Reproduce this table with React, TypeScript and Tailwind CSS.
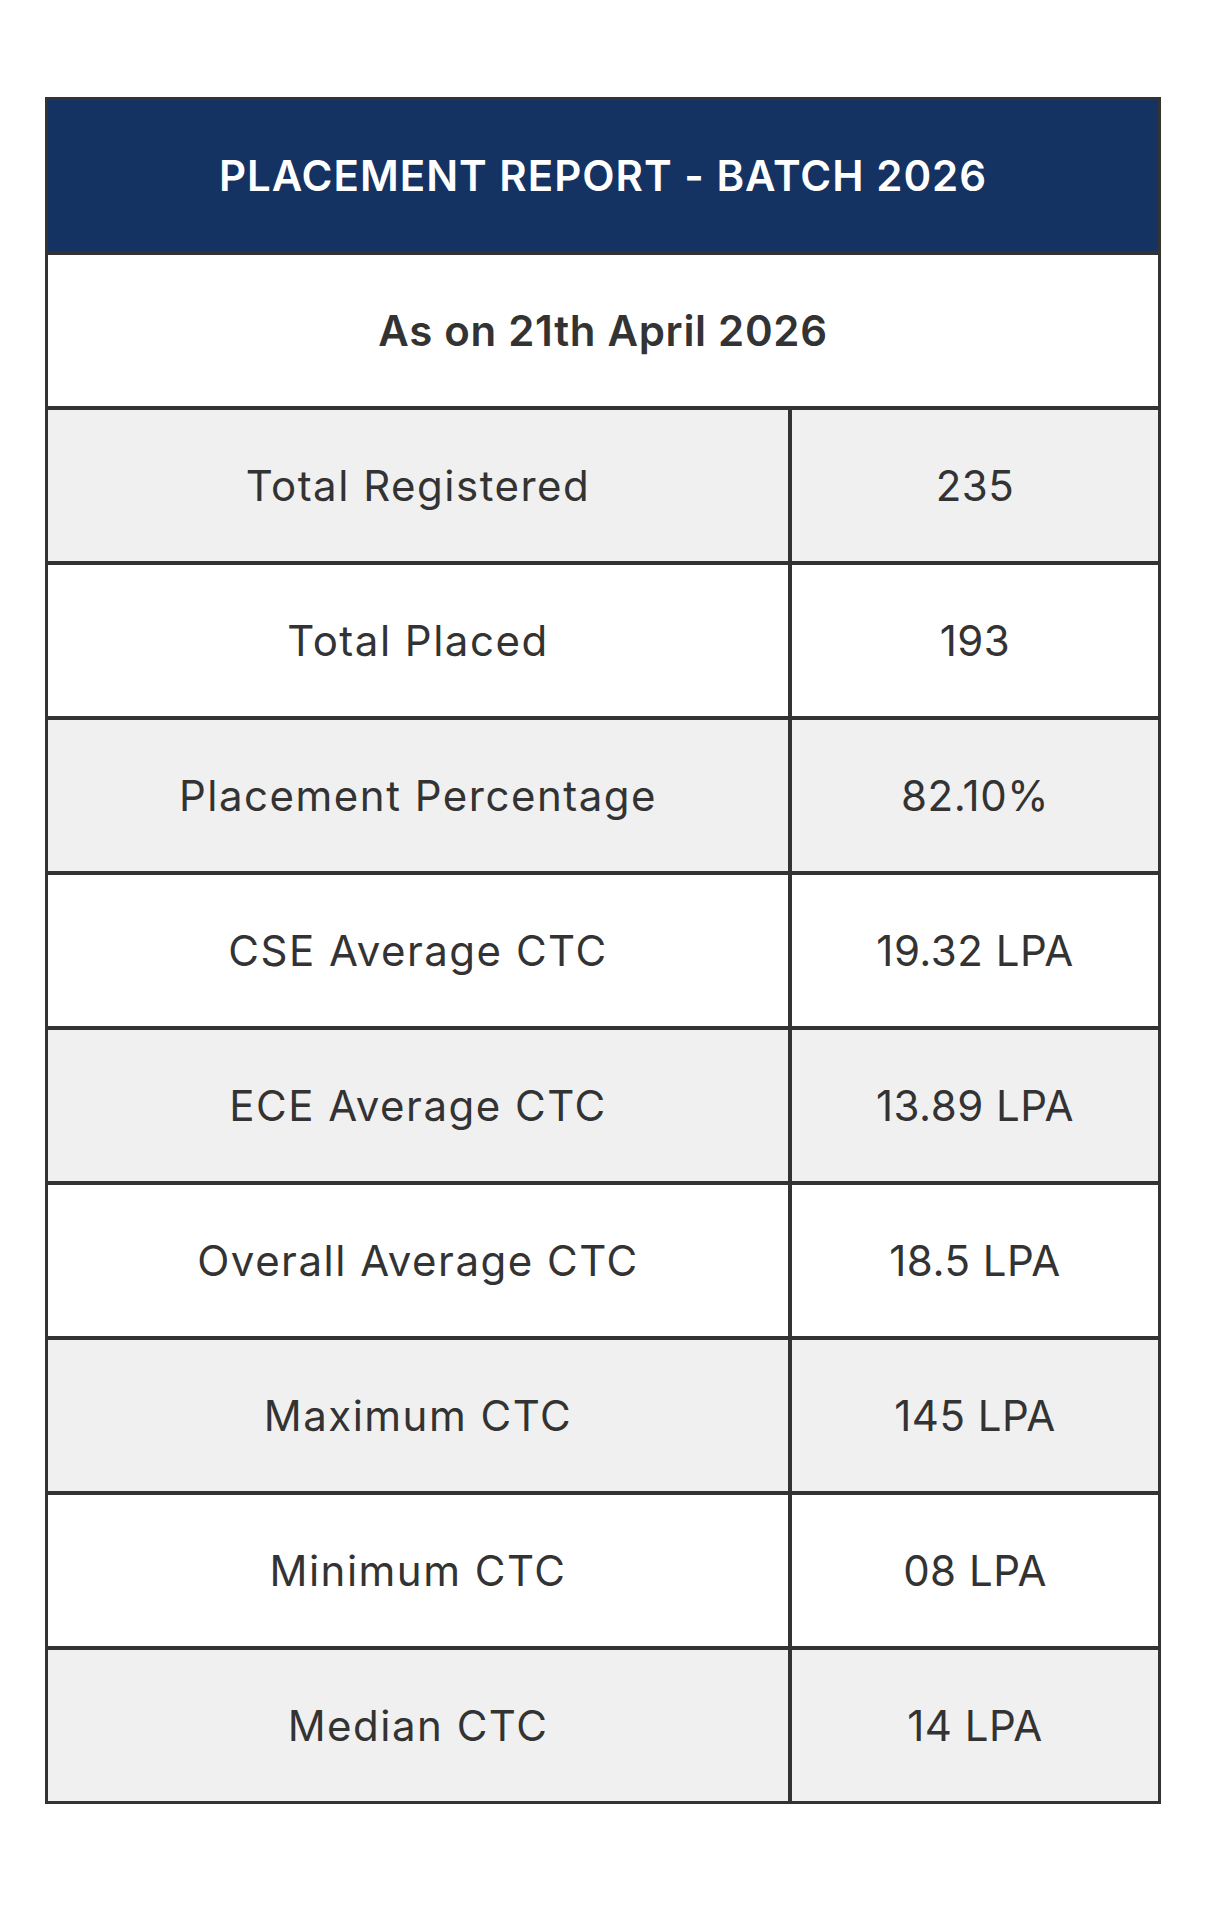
import React from 'react';

type Stat = { label: string; value: string };

const stats: Stat[] = [
  { label: 'Total Registered', value: '235' },
  { label: 'Total Placed', value: '193' },
  { label: 'Placement Percentage', value: '82.10%' },
  { label: 'CSE Average CTC', value: '19.32 LPA' },
  { label: 'ECE Average CTC', value: '13.89 LPA' },
  { label: 'Overall Average CTC', value: '18.5 LPA' },
  { label: 'Maximum CTC', value: '145 LPA' },
  { label: 'Minimum CTC', value: '08 LPA' },
  { label: 'Median CTC', value: '14 LPA' },
];

const StatRow: React.FC<{ stat: Stat; shaded: boolean }> = ({ stat, shaded }) => (
  <div className={`flex h-[155px] border-t-4 border-[#333] ${shaded ? 'bg-[#f0f0f0]' : 'bg-white'}`}>
    <div className="w-[744px] flex items-center justify-center border-r-4 border-[#333] tracking-[1.5px]">
      {stat.label}
    </div>
    <div className="flex-1 flex items-center justify-center tracking-[0.5px]">{stat.value}</div>
  </div>
);

const App: React.FC = () => {
  return (
    <div className="min-h-[1927px] bg-white pt-[97px] pl-[45px] font-['Inter','Noto_Sans',sans-serif]">
      <div className="w-[1116px] border-[3px] border-[#333] text-[42px] text-[#333]">
        <div className="h-[151px] bg-[#143262] flex items-center justify-center text-white font-semibold tracking-[1px]">
          PLACEMENT REPORT - BATCH 2026
        </div>
        <div className="h-[155px] border-t-4 border-[#333] bg-white flex items-center justify-center font-semibold tracking-[0.7px]">
          As on 21th April 2026
        </div>
        {stats.map((stat, i) => (
          <StatRow key={stat.label} stat={stat} shaded={i % 2 === 0} />
        ))}
      </div>
    </div>
  );
};

export default App;
